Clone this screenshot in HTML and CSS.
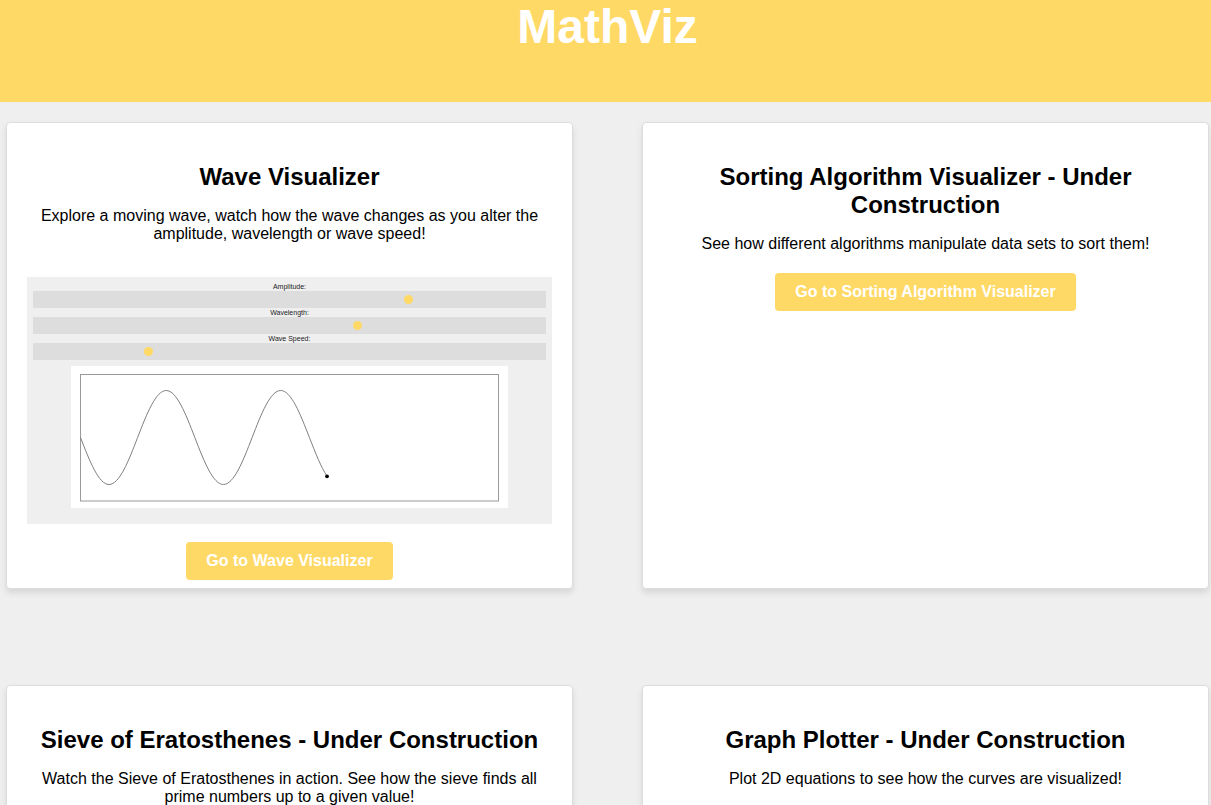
FILE: index.html
```html
<!DOCTYPE html>
<html lang="en">
<head>
  <meta charset="utf-8">
  <meta name="viewport" content="width=device-width, initial-scale=1">
  <title>MathViz</title>
  <link rel="stylesheet" href="styles.css">
</head>
<body>
  <header class="site-header">
    <h1 class="site-title">MathViz</h1>
  </header>
  <main class="card-grid">
    <section class="card">
      <h2 class="card-title">Wave Visualizer</h2>
      <p class="card-text">Explore a moving wave, watch how the wave changes as you alter the amplitude, wavelength or wave speed!</p>
      <div class="preview">
        <div class="control">
          <label class="control-label" for="amplitude">Amplitude:</label>
          <input class="slider" id="amplitude" type="range" min="0" max="1000" value="736">
        </div>
        <div class="control">
          <label class="control-label" for="wavelength">Wavelength:</label>
          <input class="slider" id="wavelength" type="range" min="0" max="1000" value="635">
        </div>
        <div class="control">
          <label class="control-label" for="speed">Wave Speed:</label>
          <input class="slider" id="speed" type="range" min="0" max="1000" value="220">
        </div>
        <div class="plot">
          <svg class="plot-canvas" viewBox="-1 0 420 128" role="img" aria-label="Sine wave">
            <rect class="plot-frame" x="0.5" y="0.5" width="418" height="126.5"/>
            <path class="plot-wave" d="M0.5 63.5C9.8 87.6 18.8 110.5 29 110.5C39.3 110.5 48.3 87.6 57.6 63.5C66.9 39.4 75.9 16.5 86.2 16.5C96.5 16.5 105.5 39.4 114.8 63.5C124.1 87.6 133.1 110.5 143.4 110.5C153.7 110.5 162.8 87.6 172.1 63.5C181.4 39.4 190.4 16.5 200.7 16.5C211 16.5 220 39.4 229.4 63.5C235.3 78.6 241.1 93.5 247 102.1"/>
            <circle class="plot-point" cx="247" cy="102.3" r="1.9"/>
          </svg>
        </div>
      </div>
      <a class="button" href="#wave">Go to Wave Visualizer</a>
    </section>
    <section class="card">
      <h2 class="card-title">Sorting Algorithm Visualizer - Under Construction</h2>
      <p class="card-text">See how different algorithms manipulate data sets to sort them!</p>
      <a class="button button-spaced" href="#sorting">Go to Sorting Algorithm Visualizer</a>
    </section>
    <section class="card">
      <h2 class="card-title">Sieve of Eratosthenes - Under Construction</h2>
      <p class="card-text">Watch the Sieve of Eratosthenes in action. See how the sieve finds all prime numbers up to a given value!</p>
    </section>
    <section class="card">
      <h2 class="card-title">Graph Plotter - Under Construction</h2>
      <p class="card-text">Plot 2D equations to see how the curves are visualized!</p>
    </section>
  </main>
</body>
</html>
```

FILE: styles.css
```css
* {
  box-sizing: border-box;
}

html {
  scrollbar-width: none;
}

body {
  margin: 0;
  background: #efefef;
  color: #000;
  font-family: "Liberation Sans", Arial, sans-serif;
  font-size: 16px;
  line-height: 18px;
}

.site-header {
  padding: 0 2px 48px 6px;
  background: #ffd966;
  text-align: center;
}

.site-title {
  margin: 0;
  color: #fff;
  font-size: 48px;
  line-height: 54px;
}

.card-grid {
  display: grid;
  grid-template-columns: 1fr 1fr;
  gap: 96px 69px;
  padding: 20px 2px 20px 6px;
}

.card {
  padding: 40px 20px 8px;
  border: 1px solid #ddd;
  border-radius: 4px;
  background: #fff;
  box-shadow: 0 4px 6px rgba(0, 0, 0, 0.1);
  text-align: center;
}

.card-title {
  margin: 0 0 16px;
  font-size: 24px;
  line-height: 28px;
}

.card-text {
  margin: 0;
}

.preview {
  margin: 34px 0 18px;
  padding: 5px 6px 16px;
  background: #efefef;
}

.control {
  display: flex;
  flex-direction: column;
}

.control-label {
  font-size: 7px;
  line-height: 9px;
  color: #222;
}

.slider {
  appearance: none;
  width: 100%;
  height: 17px;
  margin: 0;
  background: #ddd;
}

.slider::-webkit-slider-thumb {
  appearance: none;
  width: 9px;
  height: 9px;
  border-radius: 50%;
  background: #ffd966;
}

.plot {
  width: 85%;
  margin: 6px auto 0;
  padding: 8px 8px 6px;
  background: #fff;
}

.plot-canvas {
  display: block;
  width: 100%;
}

.plot-frame {
  fill: none;
  stroke: #999;
}

.plot-wave {
  fill: none;
  stroke: #808080;
}

.plot-point {
  fill: #000;
}

.button {
  display: inline-block;
  padding: 10px 20px;
  border-radius: 4px;
  background: #ffd966;
  color: #fff;
  font-weight: bold;
  text-decoration: none;
}

.button-spaced {
  margin-top: 20px;
}

@media (max-width: 700px) {
  .card-grid {
    grid-template-columns: 1fr;
  }
}
```
